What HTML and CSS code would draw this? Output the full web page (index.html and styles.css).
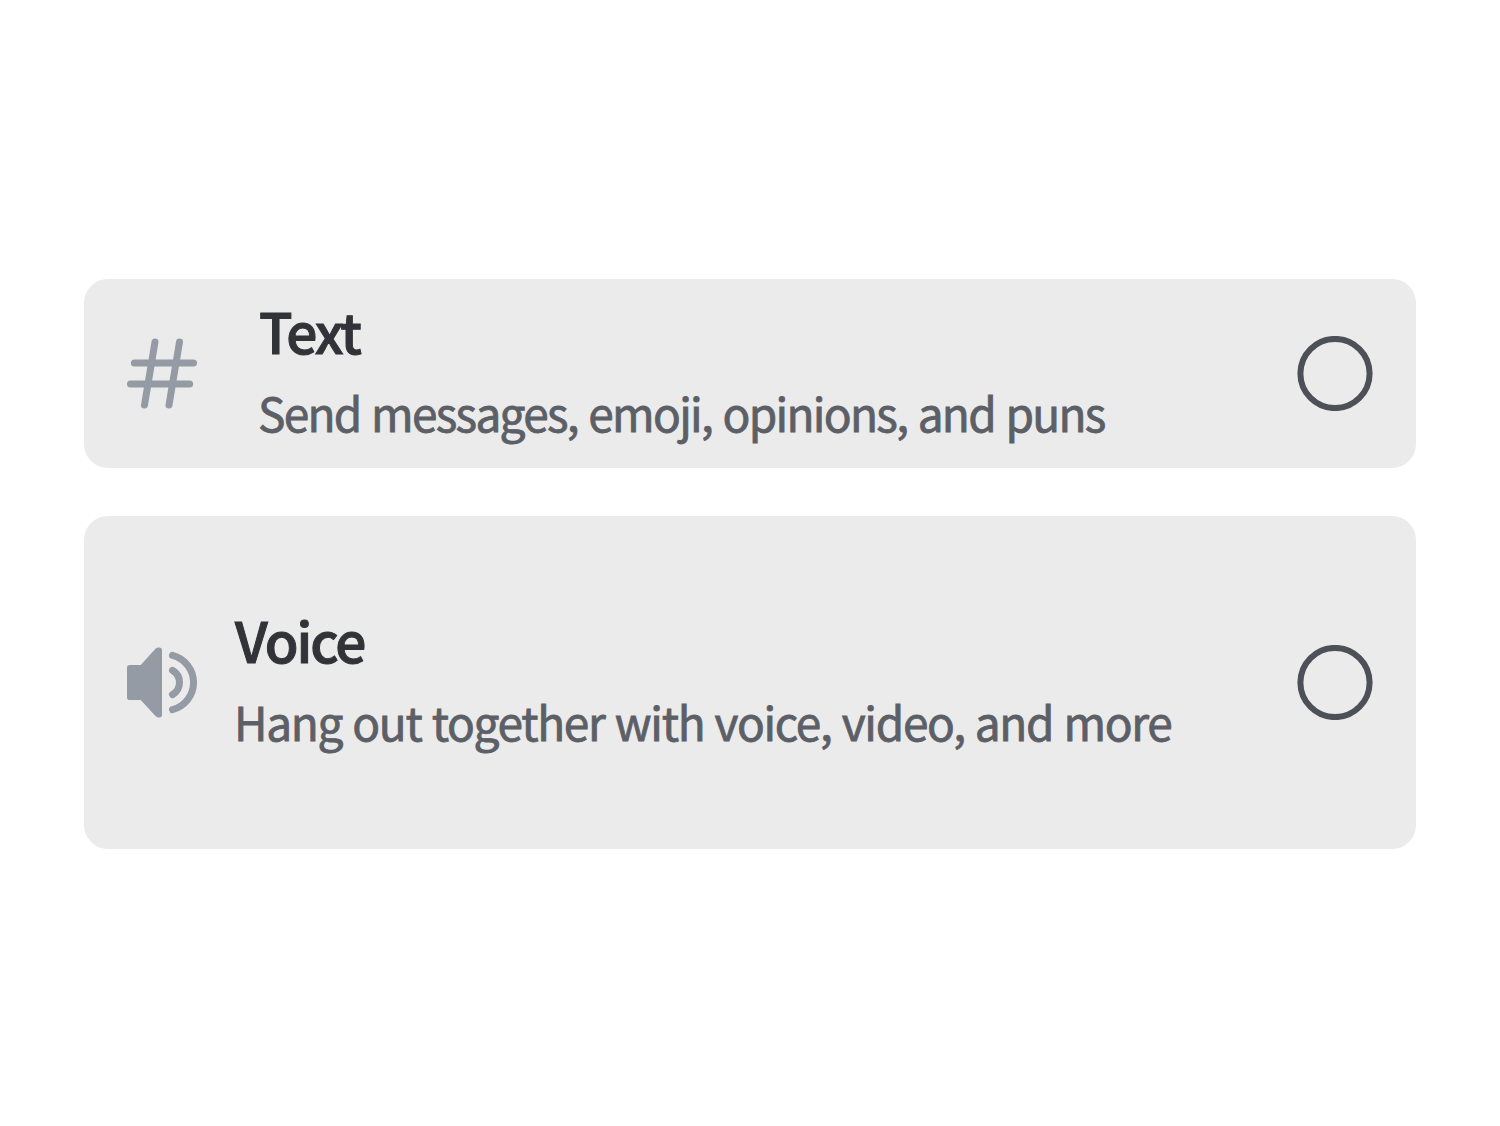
FILE: index.html
```html
<!DOCTYPE html>
<html lang="en">
<head>
<meta charset="utf-8">
<title>Channel Type</title>
<link rel="stylesheet" href="styles.css">
</head>
<body>
<main class="options">
  <label class="option option-text">
    <svg class="icon" viewBox="0 -0.14 24 24" fill="none" stroke="currentColor" stroke-width="2" stroke-linecap="round">
      <path d="M10 3 7 21M17 3l-3 18M4.1 9H21M3 15h16.9"/>
    </svg>
    <span class="copy">
      <span class="title">Text</span>
      <span class="description">Send messages, emoji, opinions, and puns</span>
    </span>
    <svg class="radio" viewBox="0 0 76 75"><circle cx="38" cy="37.5" r="34.6"/></svg>
  </label>
  <label class="option option-voice">
    <svg class="icon" viewBox="0 -0.14 24 24">
      <path fill="currentColor" d="M12 2.8a.8.8 0 0 0-.8-.8h-.26a1 1 0 0 0-.74.32L5.92 7H2.8a.8.8 0 0 0-.8.8v8.4a.8.8 0 0 0 .8.8h3.12l4.28 4.68a1 1 0 0 0 .74.32h.26a.8.8 0 0 0 .8-.8V2.8Z"/>
      <path fill="none" stroke="currentColor" stroke-width="2" stroke-linecap="round" d="M15 4.25a8 8 0 0 1 0 15.5M15 8.54a4 4 0 0 1 0 6.92"/>
    </svg>
    <span class="copy">
      <span class="title">Voice</span>
      <span class="description">Hang out together with voice, video, and more</span>
    </span>
    <svg class="radio" viewBox="0 0 76 75"><circle cx="38" cy="37.5" r="34.6"/></svg>
  </label>
</main>
</body>
</html>
```
FILE: styles.css
```css
body {
  margin: 0;
  background: #fff;
  font-family: "Noto Sans CJK SC", "Noto Sans", sans-serif;
}

.options {
  box-sizing: border-box;
  height: 1126px;
  padding: 279px 84px 0;
  display: flex;
  flex-direction: column;
  gap: 48px;
}

.option {
  box-sizing: border-box;
  display: flex;
  align-items: center;
  padding: 0 43px 0 36px;
  border-radius: 24px;
  background: #ebebeb;
}

.option-text {
  height: 189px;
  --icon-gap: 54px;
  --description-spacing: -1.7px;
  --word-gap: 1.8px;
}

.option-voice {
  height: 333px;
  --icon-gap: 30px;
  --description-spacing: -1.3px;
  --word-gap: 1.1px;
}

.icon {
  flex: none;
  width: 84px;
  height: 84px;
  margin: 0 var(--icon-gap) 1px 0;
  color: #949ba5;
}

.copy {
  flex: 1;
  display: flex;
  flex-direction: column;
  gap: 27px;
  white-space: nowrap;
}

.title {
  padding-left: 1px;
  font-size: 55px;
  line-height: 50px;
  font-weight: 500;
  letter-spacing: -2px;
  color: #313338;
  -webkit-text-stroke: 1px #313338;
}

.description {
  font-size: 46px;
  line-height: 61px;
  font-weight: 400;
  letter-spacing: var(--description-spacing);
  word-spacing: var(--word-gap);
  color: #5c5f66;
  -webkit-text-stroke: .8px #5c5f66;
}

.radio {
  flex: none;
  width: 76px;
  height: 75px;
  fill: none;
  stroke: #4e5058;
  stroke-width: 6px;
}
```
